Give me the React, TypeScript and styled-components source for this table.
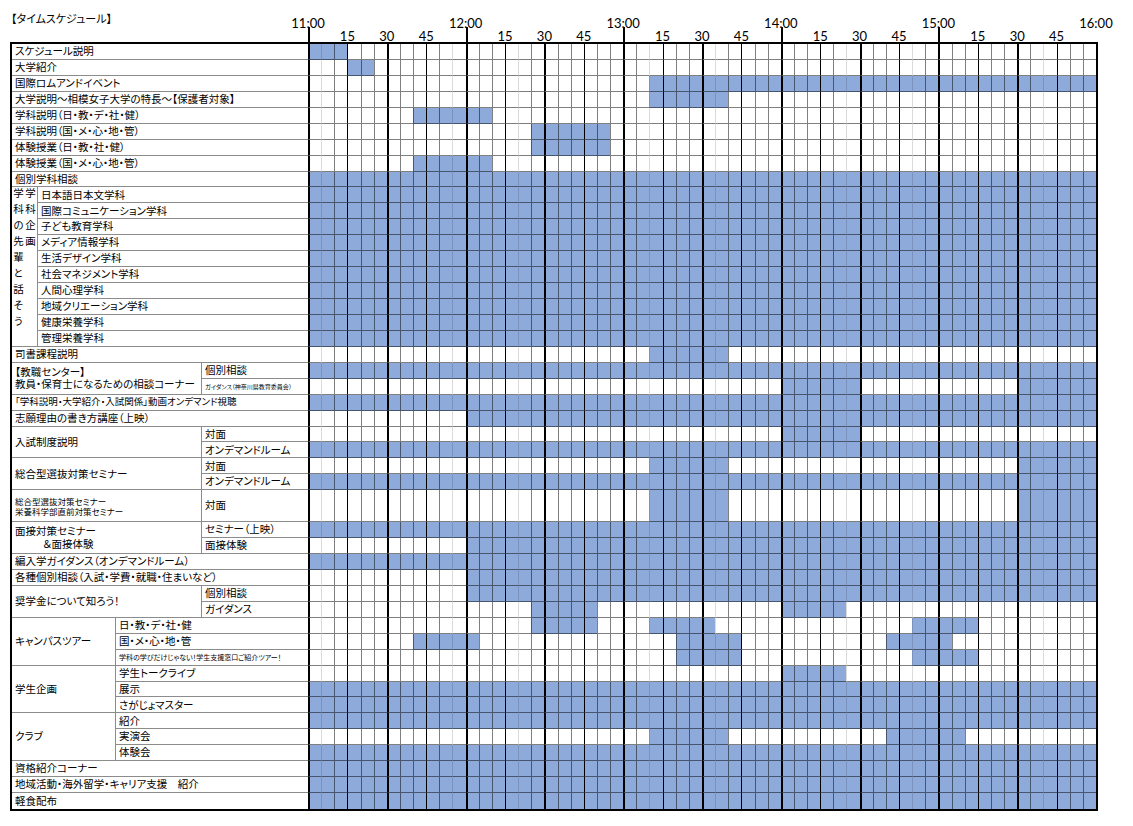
import React from 'react'
import styled, { createGlobalStyle } from 'styled-components'

// Geometry

const LABEL_COLUMNS = '26px 78px 86px 106px'
const ROW_TEMPLATE = 'repeat(28, 15.94px) 31.88px repeat(18, 15.94px)'
const ROW_COUNT = 47
const SLOTS = 60
const BLUE = '#8eaadb'
const FAINT = new Set([1, 11, 16, 26, 31, 41, 46, 56])

type Range = [number, number]
const ALL: Range[] = [[0, 60]]

// blue 5-minute slots per grid row (start inclusive, end exclusive)
const schedule: Range[][] = [
    [[0, 3]],
    [[3, 5]],
    [[26, 60]],
    [[26, 32]],
    [[8, 14]],
    [[17, 23]],
    [[17, 23]],
    [[8, 14]],
    ALL,
    ALL, ALL, ALL, ALL, ALL, ALL, ALL, ALL, ALL, ALL,
    [[26, 32]],
    ALL,
    [[36, 42], [54, 60]],
    ALL,
    [[12, 60]],
    [[36, 42]],
    ALL,
    [[26, 32], [54, 60]],
    ALL,
    [[26, 32], [54, 60]],
    ALL,
    [[12, 60]],
    ALL,
    [[12, 60]],
    [[12, 60]],
    [[17, 22], [36, 41]],
    [[17, 22], [26, 31], [46, 51]],
    [[8, 13], [28, 33], [44, 49]],
    [[28, 33], [46, 51]],
    [[36, 41]],
    ALL, ALL, ALL,
    [[26, 32], [44, 50]],
    ALL, ALL, ALL, ALL
]

type LineKind = 'major' | 'quarter' | 'thin' | 'faint'

const lineBorders: Record<LineKind, string> = {
    major: '2px solid #000',
    quarter: '1px solid #000',
    thin: '1px solid rgba(0, 0, 0, 0.5)',
    faint: '1px solid rgba(0, 0, 0, 0.14)'
}

const lineKind = (i: number): LineKind => {
    if (i % 6 === 0) return 'major'
    if (i % 3 === 0) return 'quarter'
    if (FAINT.has(i)) return 'faint'
    return 'thin'
}

type LabelDef = {
    row: number
    rows?: number
    from: number
    to?: number
    lines: string[]
    size?: number
    indent?: number
}

const departments = [
    '日本語日本文学科',
    '国際コミュニケーション学科',
    '子ども教育学科',
    'メディア情報学科',
    '生活デザイン学科',
    '社会マネジメント学科',
    '人間心理学科',
    '地域クリエーション学科',
    '健康栄養学科',
    '管理栄養学科'
]

const labels: LabelDef[] = [
    { row: 1, from: 1, lines: ['スケジュール説明'] },
    { row: 2, from: 1, lines: ['大学紹介'] },
    { row: 3, from: 1, lines: ['国際ロムアンドイベント'] },
    { row: 4, from: 1, lines: ['大学説明～相模女子大学の特長～【保護者対象】'] },
    { row: 5, from: 1, lines: ['学科説明（日・教・デ・社・健）'] },
    { row: 6, from: 1, lines: ['学科説明（国・メ・心・地・管）'] },
    { row: 7, from: 1, lines: ['体験授業（日・教・社・健）'] },
    { row: 8, from: 1, lines: ['体験授業（国・メ・心・地・管）'] },
    { row: 9, from: 1, lines: ['個別学科相談'] },
    ...departments.map((name, i) => ({ row: 10 + i, from: 2, lines: [name] })),
    { row: 20, from: 1, lines: ['司書課程説明'] },
    { row: 21, rows: 2, from: 1, to: 4, lines: ['【教職センター】', '教員・保育士になるための相談コーナー'] },
    { row: 21, from: 4, lines: ['個別相談'] },
    { row: 22, from: 4, lines: ['ガイダンス（神奈川県教育委員会）'], size: 6 },
    { row: 23, from: 1, lines: ['「学科説明・大学紹介・入試関係」動画オンデマンド視聴'], size: 9.5 },
    { row: 24, from: 1, lines: ['志願理由の書き方講座（上映）'] },
    { row: 25, rows: 2, from: 1, to: 4, lines: ['入試制度説明'] },
    { row: 25, from: 4, lines: ['対面'] },
    { row: 26, from: 4, lines: ['オンデマンドルーム'] },
    { row: 27, rows: 2, from: 1, to: 4, lines: ['総合型選抜対策セミナー'] },
    { row: 27, from: 4, lines: ['対面'] },
    { row: 28, from: 4, lines: ['オンデマンドルーム'] },
    { row: 29, from: 1, to: 4, lines: ['総合型選抜対策セミナー', '栄養科学部直前対策セミナー'], size: 8.5 },
    { row: 29, from: 4, lines: ['対面'] },
    { row: 30, rows: 2, from: 1, to: 4, lines: ['面接対策セミナー', '＆面接体験'], indent: 28 },
    { row: 30, from: 4, lines: ['セミナー（上映）'] },
    { row: 31, from: 4, lines: ['面接体験'] },
    { row: 32, from: 1, lines: ['編入学ガイダンス（オンデマンドルーム）'] },
    { row: 33, from: 1, lines: ['各種個別相談（入試・学費・就職・住まいなど）'] },
    { row: 34, rows: 2, from: 1, to: 4, lines: ['奨学金について知ろう！'] },
    { row: 34, from: 4, lines: ['個別相談'] },
    { row: 35, from: 4, lines: ['ガイダンス'] },
    { row: 36, rows: 3, from: 1, to: 3, lines: ['キャンパスツアー'] },
    { row: 36, from: 3, lines: ['日・教・デ・社・健'] },
    { row: 37, from: 3, lines: ['国・メ・心・地・管'] },
    { row: 38, from: 3, lines: ['学科の学びだけじゃない！学生支援窓口ご紹介ツアー！'], size: 7 },
    { row: 39, rows: 3, from: 1, to: 3, lines: ['学生企画'] },
    { row: 39, from: 3, lines: ['学生トークライブ'] },
    { row: 40, from: 3, lines: ['展示'] },
    { row: 41, from: 3, lines: ['さがじょマスター'] },
    { row: 42, rows: 3, from: 1, to: 3, lines: ['クラブ'] },
    { row: 42, from: 3, lines: ['紹介'] },
    { row: 43, from: 3, lines: ['実演会'] },
    { row: 44, from: 3, lines: ['体験会'] },
    { row: 45, from: 1, lines: ['資格紹介コーナー'] },
    { row: 46, from: 1, lines: ['地域活動・海外留学・キャリア支援　紹介'] },
    { row: 47, from: 1, lines: ['軽食配布'] }
]

// Styles

const GlobalStyle = createGlobalStyle`
  body {
    margin: 0;
    background: #fff;
    color: #000;
    font-family: "Noto Sans CJK JP", "Noto Sans", sans-serif;
  }
`

const Page = styled.div`
  padding: 8px 0 0 10px;
`

const Header = styled.div`
  display: grid;
  width: 1088px;
  box-sizing: border-box;
  padding-right: 2px;
  grid-template-columns: 28px 78px 86px 106px repeat(60, 1fr);
  grid-template-rows: 20px 14px;
`

const Title = styled.div`
  grid-row: 1;
  grid-column: 1 / 5;
  align-self: center;
  font-size: 11px;
  padding-left: 1px;
  font-feature-settings: "palt";
`

const Marker = styled.div<{ $at: number; $rows: string }>`
  grid-row: ${p => p.$rows};
  grid-column: ${p => p.$at >= SLOTS ? '64 / 65' : `${p.$at + 5} / span 1`};
  justify-self: ${p => p.$at >= SLOTS ? 'end' : 'start'};
  width: 0;
  display: flex;
  flex-direction: column;
  align-items: center;
`

const HourText = styled.span`
  margin-top: 8px;
  font-family: Lato, "Noto Sans", sans-serif;
  font-size: 13px;
  line-height: 14px;
  white-space: nowrap;
`

const QuarterText = styled.span`
  margin-top: 1px;
  font-family: Lato, "Noto Sans", sans-serif;
  font-size: 13px;
  line-height: 14px;
  white-space: nowrap;
`

const Tick = styled.span`
  flex: 1;
  width: 2px;
  margin-top: -3px;
  background: #000;
  transform: translateX(1px);
`

const Table = styled.div`
  display: grid;
  width: 1088px;
  box-sizing: border-box;
  border: 2px solid #000;
  grid-template-columns: ${LABEL_COLUMNS} repeat(60, 1fr);
  grid-template-rows: ${ROW_TEMPLATE};
`

const Label = styled.div<{ $row: string; $col: string; $size: number; $edge: boolean; $last: boolean }>`
  grid-row: ${p => p.$row};
  grid-column: ${p => p.$col};
  display: flex;
  flex-direction: column;
  justify-content: center;
  padding-left: 3px;
  font-size: ${p => p.$size}px;
  white-space: nowrap;
  overflow: hidden;
  font-feature-settings: "palt";
  border-right: ${p => p.$edge ? 'none' : '1px solid #8c8c8c'};
  border-bottom: ${p => p.$last ? 'none' : '1px solid #8c8c8c'};
`

const LabelLine = styled.span<{ $indent: number }>`
  padding-left: ${p => p.$indent}px;
  line-height: 1.2;
`

const VerticalCell = styled.div`
  grid-row: 10 / span 10;
  grid-column: 1 / 2;
  display: flex;
  justify-content: center;
  gap: 1px;
  padding-top: 1px;
  border-right: 1px solid #8c8c8c;
  border-bottom: 1px solid #8c8c8c;
`

const VerticalText = styled.span`
  writing-mode: vertical-rl;
  font-size: 10.5px;
  line-height: 11px;
  letter-spacing: 5.5px;
`

const Slot = styled.div<{ $on: boolean; $line: LineKind; $last: boolean }>`
  min-width: 0;
  background: ${p => p.$on ? BLUE : '#fff'};
  border-left: ${p => lineBorders[p.$line]};
  border-bottom: ${p => p.$last ? 'none' : '1px solid rgba(0, 0, 0, 0.5)'};
`

// Parts

const TimeHeader = () => {
    const markers = []
    for (let k = 0; k <= SLOTS; k += 3) {
        if (k % 12 === 0) {
            markers.push(
                <Marker key={k} $at={k} $rows={'1 / 3'}>
                    <HourText>{`${11 + k / 12}:00`}</HourText>
                    {k < SLOTS && <Tick />}
                </Marker>
            )
        } else {
            markers.push(
                <Marker key={k} $at={k} $rows={'2'}>
                    <QuarterText>{String((k % 12) * 5)}</QuarterText>
                </Marker>
            )
        }
    }
    return (
        <Header>
            <Title>【タイムスケジュール】</Title>
            {markers}
        </Header>
    )
}

const isOn = (ranges: Range[], i: number) =>
    ranges.some(([a, b]) => i >= a && i < b)

export default function App() {
    return (
        <Page>
            <GlobalStyle />
            <TimeHeader />
            <Table>
                {labels.map((d, index) => {
                    const to = d.to ?? 5
                    const rows = d.rows ?? 1
                    return (
                        <Label
                            key={`l${index}`}
                            $row={`${d.row} / span ${rows}`}
                            $col={`${d.from} / ${to}`}
                            $size={d.size ?? 10.5}
                            $edge={to === 5}
                            $last={d.row + rows - 1 === ROW_COUNT}
                        >
                            {d.lines.map((text, i) => (
                                <LabelLine key={i} $indent={i > 0 ? d.indent ?? 0 : 0}>
                                    {text}
                                </LabelLine>
                            ))}
                        </Label>
                    )
                })}
                <VerticalCell>
                    <VerticalText>学科の先輩と話そう</VerticalText>
                    <VerticalText>学科企画</VerticalText>
                </VerticalCell>
                {schedule.map((ranges, r) =>
                    Array.from({ length: SLOTS }, (_, i) => (
                        <Slot
                            key={`s${r}-${i}`}
                            $on={isOn(ranges, i)}
                            $line={lineKind(i)}
                            $last={r === ROW_COUNT - 1}
                        />
                    ))
                )}
            </Table>
        </Page>
    )
}
